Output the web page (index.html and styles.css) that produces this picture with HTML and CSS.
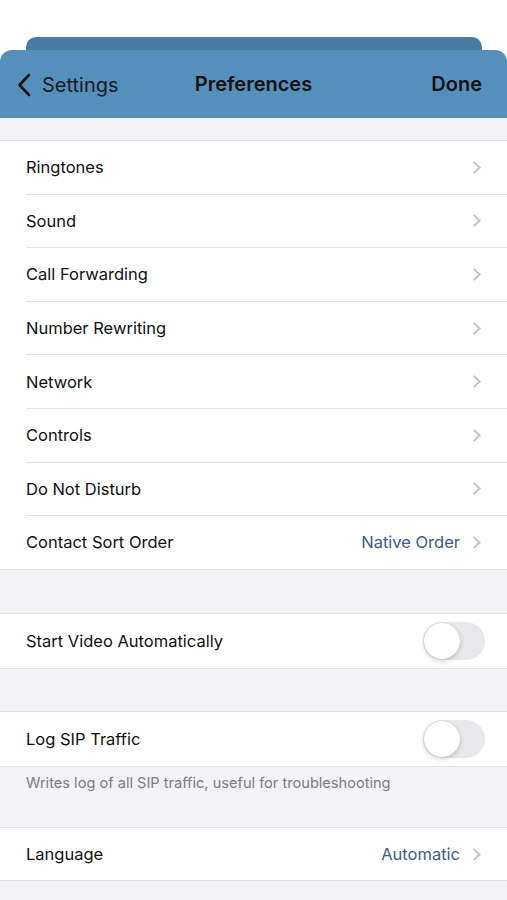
FILE: index.html
```html
<!DOCTYPE html>
<html>
<head>
    <meta charset="UTF-8">
    <title>Preferences</title>
    <link rel="stylesheet" href="styles.css">
</head>
<body>
    <div class="sheet-back"></div>
    <div class="sheet">
        <!-- Barra de navegação -->
        <header class="navbar">
            <div class="nav-back">
                <svg width="14" height="24" viewBox="0 0 14 24"><path d="M12 2 L2.5 12 L12 22" fill="none" stroke="#111" stroke-width="2.6" stroke-linecap="round" stroke-linejoin="round"/></svg>
                <span>Settings</span>
            </div>
            <div class="nav-title">Preferences</div>
            <div class="nav-done">Done</div>
        </header>

        <div class="gap gap-top"></div>
        <ul class="group">
            <li class="row"><span class="label">Ringtones</span><span class="chev"></span></li>
            <li class="row"><span class="label">Sound</span><span class="chev"></span></li>
            <li class="row"><span class="label">Call Forwarding</span><span class="chev"></span></li>
            <li class="row"><span class="label">Number Rewriting</span><span class="chev"></span></li>
            <li class="row"><span class="label">Network</span><span class="chev"></span></li>
            <li class="row"><span class="label">Controls</span><span class="chev"></span></li>
            <li class="row"><span class="label">Do Not Disturb</span><span class="chev"></span></li>
            <li class="row"><span class="label">Contact Sort Order</span><span class="value">Native Order</span><span class="chev"></span></li>
        </ul>

        <div class="gap"></div>
        <ul class="group">
            <li class="row row-switch"><span class="label">Start Video Automatically</span><span class="switch"></span></li>
        </ul>

        <div class="gap gap-small"></div>
        <ul class="group">
            <li class="row row-switch"><span class="label">Log SIP Traffic</span><span class="switch"></span></li>
        </ul>
        <div class="footer">Writes log of all SIP traffic, useful for troubleshooting</div>

        <ul class="group">
            <li class="row"><span class="label">Language</span><span class="value">Automatic</span><span class="chev"></span></li>
        </ul>
    </div>
</body>
</html>
```

FILE: styles.css
```css
body {
    margin: 0;
    background-color: #FFFFFF;
    font-family: Inter, "Noto Sans", sans-serif;
    color: #111111;
}
.sheet-back {
    height: 13px;
    margin: 37px 25px 0 26px;
    background-color: #4a7ba2;
    border-radius: 10px 10px 0 0;
}
.sheet {
    background-color: #f2f2f7;
    border-radius: 12px 12px 0 0;
    overflow: hidden;
    min-height: 850px;
}
.navbar {
    height: 68px;
    background-color: #5590bd;
    display: flex;
    align-items: center;
    padding: 0 25px 0 17px;
    position: relative;
    font-size: 20px;
}
.nav-back {
    display: flex;
    align-items: center;
    gap: 11px;
    color: #1a1a1a;
    padding-top: 2px;
}
.nav-title {
    position: absolute;
    left: 0;
    right: 0;
    text-align: center;
    font-weight: 600;
    pointer-events: none;
}
.nav-done {
    margin-left: auto;
    font-weight: 600;
}
.gap {
    height: 43px;
}
.gap-top {
    height: 22px;
}
.gap-small {
    height: 42px;
}
.group {
    list-style: none;
    margin: 0;
    padding: 0 0 0 26px;
    background-color: #FFFFFF;
    border-top: 1px solid #e4e4e8;
    border-bottom: 1px solid #e4e4e8;
}
.row {
    height: 52.6px;
    display: flex;
    align-items: center;
    padding-right: 26px;
    font-size: 16.5px;
    border-bottom: 1px solid #e4e4e8;
}
.row:last-child {
    border-bottom: none;
}
.row-switch {
    height: 54px;
    padding-right: 22px;
}
.label {
    flex: 1;
}
.value {
    color: #3f5a8c;
    margin-right: 10px;
}
.chev {
    width: 7px;
    height: 7px;
    border-right: 2px solid #c4c4c8;
    border-top: 2px solid #c4c4c8;
    transform: rotate(45deg);
    margin-right: 2px;
}
.switch {
    width: 62px;
    height: 38px;
    border-radius: 19px;
    background-color: #e9e9eb;
    position: relative;
}
.switch::after {
    content: "";
    position: absolute;
    left: 1px;
    top: 1px;
    width: 36px;
    height: 36px;
    border-radius: 50%;
    background-color: #FFFFFF;
    box-shadow: 0 2px 5px rgba(0, 0, 0, 0.18), 0 0 1px rgba(0, 0, 0, 0.2);
}
.footer {
    font-size: 14.6px;
    color: #7c7c82;
    padding: 7px 26px 0;
    height: 60px;
    box-sizing: border-box;
}
```
